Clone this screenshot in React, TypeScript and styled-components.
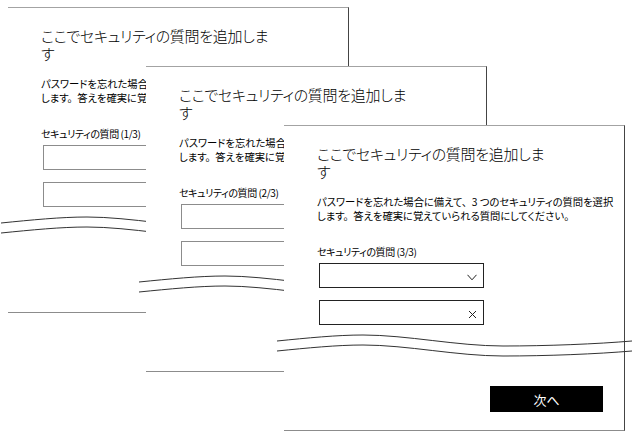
import React from 'react';
import styled, { createGlobalStyle } from 'styled-components';

const GlobalStyle = createGlobalStyle`
  html, body {
    margin: 0;
    padding: 0;
    background: #ffffff;
  }
  body {
    font-family: "Noto Sans CJK JP", "Noto Sans", sans-serif;
    font-feature-settings: "palt";
    color: #000;
    overflow: hidden;
  }
`;

const TOTAL = 3;

function App(): React.ReactElement {
  const steps = Array.from({ length: TOTAL }, (_, i) => i);
  return (
    <>
      <GlobalStyle />
      <Stage>
        {steps.map((i) => (
          <QuestionCard key={i} index={i} active={i === TOTAL - 1} />
        ))}
      </Stage>
    </>
  );
}

export default App;

type CardProps = { index: number; active: boolean };

function QuestionCard({ index, active }: CardProps) {
  return (
    <Card $index={index}>
      <Body>
        <Title>
          ここでセキュリティの質問を追加しま
          <br />す
        </Title>
        <Desc>
          パスワードを忘れた場合に備えて、{'\u00a0'} 3 つのセキュリティの質問を選択
          <br />
          します。{'\u00a0'} 答えを確実に覚えていられる質問にしてください。
        </Desc>
        <Label>
          セキュリティの質問 ({index + 1}/{TOTAL})
        </Label>
        <Field $active={active}>
          {active && (
            <svg width="10" height="7" viewBox="0 0 10 7">
              <polyline points="0.5,0.8 5,5.8 9.5,0.8" fill="none" stroke="#222" strokeWidth="1" />
            </svg>
          )}
        </Field>
        <Field $active={active}>
          {active && (
            <svg width="9" height="9" viewBox="0 0 9 9">
              <path d="M1 1 L8 8 M8 1 L1 8" stroke="#222" strokeWidth="1" />
            </svg>
          )}
        </Field>
      </Body>
      <Wave viewBox="0 0 355 26" width="355" height="26">
        <path d="M0 8 C30 5 60 2 86 2 C130 2 180 13 226 13 C270 13 320 11 355 8" />
        <path d="M0 18 C30 15 60 12 86 12 C130 12 180 23 226 23 C270 23 320 21 355 18" />
      </Wave>
      <Footer>{active && <NextButton>次へ</NextButton>}</Footer>
    </Card>
  );
}

const Stage = styled.div`
  position: relative;
  width: 632px;
  height: 437px;
  overflow: hidden;
`;

// each step sits a little lower and to the right of the one before
const Card = styled.div<{ $index: number }>`
  position: absolute;
  left: ${(p) => 8 + p.$index * 138}px;
  top: ${(p) => 7 + p.$index * 59}px;
  width: 341px;
  height: 306px;
  box-sizing: border-box;
  display: flex;
  flex-direction: column;
  background: #fff;
  border-top: 1px solid #a3a3a3;
  border-right: 1px solid #444;
  border-bottom: 1px solid #8c8c8c;
`;

const Body = styled.div`
  flex: none;
  height: 207px;
  box-sizing: border-box;
  padding: 19px 0 0 33px;
  display: flex;
  flex-direction: column;
  align-items: flex-start;
`;

const Title = styled.div`
  font-size: 15px;
  line-height: 18px;
  font-weight: 300;
  letter-spacing: -0.3px;
`;

const Desc = styled.div`
  margin-top: 14px;
  font-size: 10.3px;
  line-height: 14px;
  white-space: nowrap;
`;

const Label = styled.div`
  margin-top: 22px;
  font-size: 10px;
  line-height: 14px;
  letter-spacing: -0.4px;
  white-space: nowrap;
`;

const Field = styled.div<{ $active: boolean }>`
  margin: 4px 0 8px 2px;
  width: 165px;
  height: 26px;
  box-sizing: border-box;
  border: 1px solid ${(p) => (p.$active ? '#222' : '#8c8c8c')};
  display: flex;
  align-items: center;
  justify-content: flex-end;
  padding: 3px 6px 0 0;
`;

const Wave = styled.svg`
  flex: none;
  display: block;
  margin-left: -7px;
  overflow: visible;

  path {
    fill: none;
    stroke: #333;
    stroke-width: 1;
  }
`;

const Footer = styled.div`
  flex: 1;
  display: flex;
  justify-content: flex-end;
  align-items: flex-start;
  padding: 27px 21px 0 0;
`;

const NextButton = styled.button`
  width: 113px;
  height: 26px;
  border: none;
  background: #000;
  color: #fff;
  font-family: "Noto Sans CJK JP", "Noto Sans", sans-serif;
  font-size: 13px;
  padding: 0;
`;
